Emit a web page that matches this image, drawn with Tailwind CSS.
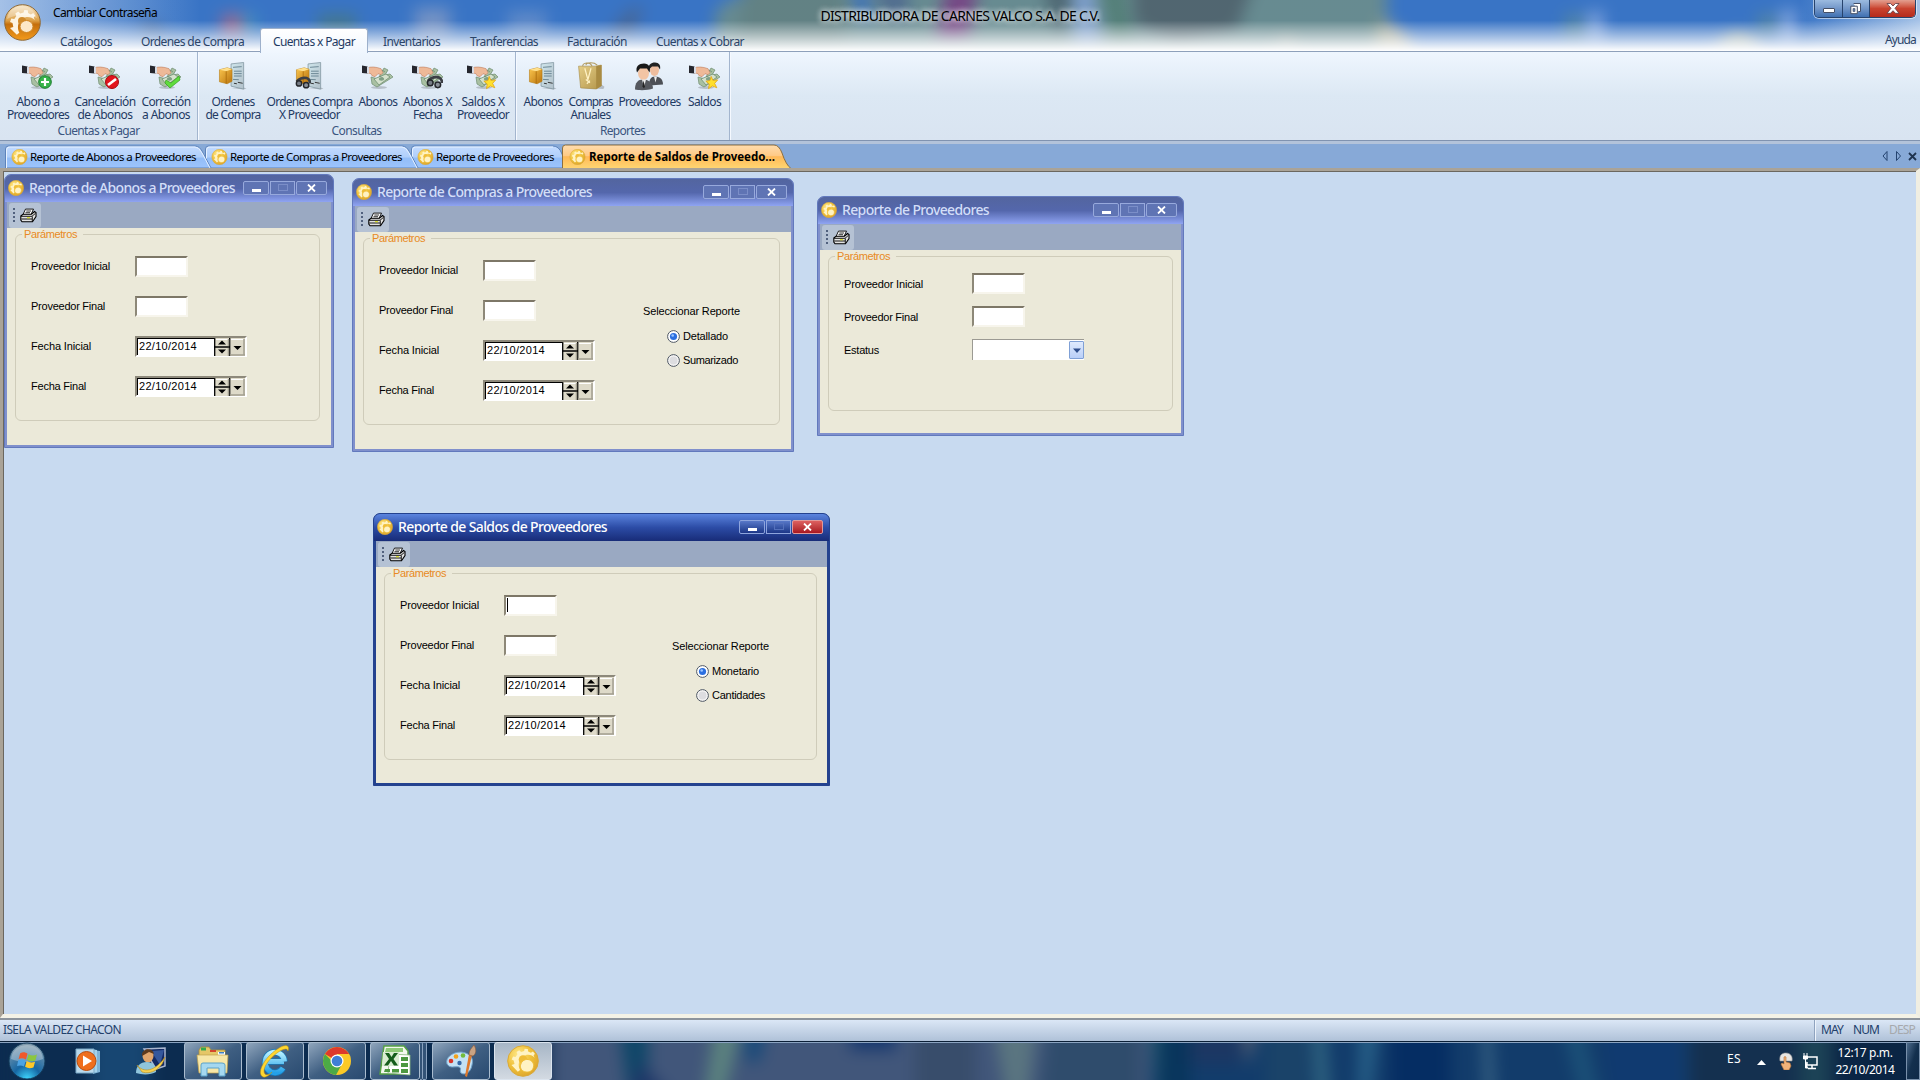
<!DOCTYPE html>
<html lang="es">
<head>
<meta charset="utf-8">
<title>DISTRIBUIDORA DE CARNES VALCO S.A. DE C.V.</title>
<script src="https://cdn.jsdelivr.net/npm/@tailwindcss/browser@4"></script>
</head>
<body class="w-[1920px] h-[1080px] overflow-hidden font-['Noto_Sans',sans-serif] text-[12px] leading-none text-[#1f3a63] whitespace-nowrap">

<!-- Shared icon definitions -->
<svg class="absolute w-0 h-0">
  <defs>
    <linearGradient id="orbG" x1="0" y1="0" x2="0" y2="1"><stop offset="0" stop-color="#f6e3c0"/><stop offset=".45" stop-color="#dc9f45"/><stop offset=".55" stop-color="#c56f0c"/><stop offset="1" stop-color="#f39a1c"/></linearGradient>
    <radialGradient id="gearG" cx=".35" cy=".3" r=".8"><stop offset="0" stop-color="#ffe98c"/><stop offset=".5" stop-color="#f0c23c"/><stop offset="1" stop-color="#dba22a"/></radialGradient>
    <linearGradient id="boxG" x1="0" y1="0" x2="1" y2="1"><stop offset="0" stop-color="#fbc64e"/><stop offset="1" stop-color="#b8720c"/></linearGradient>
    <linearGradient id="docG" x1="0" y1="0" x2="1" y2="1"><stop offset="0" stop-color="#cfe6ec"/><stop offset="1" stop-color="#b3c1ca"/></linearGradient>
    <linearGradient id="bagG" x1="0" y1="0" x2="1" y2="1"><stop offset="0" stop-color="#e6cf88"/><stop offset="1" stop-color="#b3954a"/></linearGradient>
    <radialGradient id="winG" cx=".5" cy="1" r=".95"><stop offset="0" stop-color="#3fd8ff"/><stop offset=".4" stop-color="#1667a4"/><stop offset="1" stop-color="#7d98ab"/></radialGradient>
    <linearGradient id="ieG" x1="0" y1="0" x2="0" y2="1"><stop offset="0" stop-color="#b7f0ff"/><stop offset="1" stop-color="#23a0e8"/></linearGradient>
  </defs>
  <symbol id="gear" viewBox="0 0 32 32">
    <circle cx="16" cy="16" r="15.300" fill="url(#gearG)" stroke="#d9a93a"/>
    <path d="M4.500 20l3-1-.8-3.500-2-1 1.300-3 2.500.5 2-2.700-1-2.300 2.700-1.800 1.900 1.700 3-.8.500-2.400 3.200.3.300 2.500 2.800 1.300 2-1.400 2 2.400-1.300 1.700 1 2.300c-2.500-3.500-8-4-11.500-1.500-4.500 3-5.500 9-3 13.700l-2.300 1.800-2.100-2.200z" fill="#fff3c4"/>
    <circle cx="16" cy="14.500" r="4.300" fill="#efbd38"/>
    <path d="M13.500 20.500c.5-4 4-6.500 7.500-6 4 .5 6.300 4 5.500 7.500-.8 3.700-4 5.500-7.500 5-3.700-.5-6-3.300-5.500-6.500z" fill="#fff3c4" stroke="#efbd38"/>
  </symbol>
  <symbol id="hand" viewBox="0 0 32 32">
    <ellipse cx="17" cy="25.500" rx="8" ry="1.500" fill="#000" opacity=".18"/>
    <path d="M9 15l7 2 6-11 4 2-3 5 5-1 3 3-16 10-5-3z" fill="#a9c0a2" stroke="#6f8c70" stroke-width=".7"/>
    <path d="M12 17l12-5 4 3-11 8zM20 8l3 2M17 14l4 2" fill="#d5e1cc" stroke="#66866a" stroke-width=".7"/>
    <ellipse cx="19.500" cy="17" rx="2.700" ry="1.800" fill="#7f9f85"/>
    <path d="M5 6c3-1.500 9-1.300 14 .7l2 4-2 2-3-1-3 3-3-1-1-2-4-1z" fill="#eeb998" stroke="#bd7e5e" stroke-width=".6"/>
    <path d="M0 3.500l5.500 1v7L0 11z" fill="#26272e"/><path d="M5 5l2 .3v6L5 11z" fill="#d7dce6"/>
  </symbol>
  <symbol id="star" viewBox="0 0 16 16"><path d="M7 1l2 4.500 5.500-.5-3.500 4 2.500 5L8.500 12 4 15l.8-5.300L1 6.500l4.700-.8z" fill="#ffe02c" stroke="#e0a314" stroke-width=".9"/></symbol>
  <symbol id="binoc" viewBox="0 0 18 14"><path d="M2 6C4 3 9 1 13 2c3 1 4 3 4 6" fill="none" stroke="#3c3f45" stroke-width="3"/><circle cx="4.500" cy="8" r="3" fill="#777d86" stroke="#25272b" stroke-width="1.600"/><circle cx="12.500" cy="10" r="3" fill="#8a9099" stroke="#25272b" stroke-width="1.600"/></symbol>
  <symbol id="order" viewBox="0 0 30 30">
    <path d="M13 27l13 1.500 3-1-3-1z" fill="#000" opacity=".2"/>
    <path d="M13 2l13-1.500v27.500L13 25z" fill="url(#docG)" stroke="#8195a0" stroke-width=".8"/>
    <path d="M15 5.500l9-.7M16 9.500h8M16 12h8M16 14.500h8M15 18l6 .3" stroke="#6b8794" stroke-width="1"/><path d="M20 21l5 1M16 22l3 .5" stroke="#333" stroke-width="1"/>
    <path d="M1 8l8-2 5 1.500V20l-5 2.500-8-2z" fill="url(#boxG)" stroke="#b5790f" stroke-width=".6"/>
    <path d="M1 8l7 1.500 6-2L9 6z" fill="#ffe08c"/><path d="M8 9.500v13" stroke="#a8690a" stroke-width=".8"/>
  </symbol>
  <symbol id="bag" viewBox="0 0 28 28">
    <path d="M4 25l22 1 1-2-4-3z" fill="#000" opacity=".2"/><path d="M2 4h16l6-1 0 20-5 3-15-1z" fill="url(#bagG)" stroke="#a48a48" stroke-width=".6"/><path d="M19 4l5-1v20l-5 3z" fill="#a98b42"/>
    <path d="M6 4c0-3 7-5 9 0M9 3c1-3 8-3 11 0" fill="none" stroke="#b29a5e"/><path d="M8 6l3 11 3-11M9 17l4 3M10 21l3-3" fill="none" stroke="#fff2c4" stroke-width="1.200"/>
  </symbol>
  <symbol id="people" viewBox="0 0 30 28">
    <path d="M14 23c0-6 2-9 6-9s8 2 8 8z" fill="#4c4f55"/><ellipse cx="19.500" cy="7.500" rx="4.500" ry="6" fill="#eebd9e"/><path d="M14 7c-1-5 2-7 6-7s6 3 5 7l-2-3-6 0z" fill="#222"/><path d="M19 14l1.500 6 1.500-6z" fill="#eee"/>
    <path d="M0 27c0-7 3-10 8-10s10 3 10 9c-5 2-14 2-18 1z" fill="#55585e"/><ellipse cx="8.500" cy="10.500" rx="5.500" ry="7" fill="#f2c4a4"/><path d="M2 10C0 4 4 1 9 1s7 4 5.500 9L12 6 5 6z" fill="#191919"/><path d="M7 17l2 8 2-8z" fill="#eee"/><path d="M8.500 18l-1 6 1.500 2 1-2z" fill="#222"/>
  </symbol>
  <symbol id="printer" viewBox="0 0 17 14">
    <path d="M5.500 .6h8L11 6H3z" fill="#fff" stroke="#000" stroke-width=".9"/><path d="M6.300 2.500h4.700M5.500 4.200h4.500" stroke="#000" stroke-width=".8"/>
    <path d="M.8 7.500L3 5.700h8.500l3-2.700 1.500 1v4l-3.500 5.300H2L.8 11.500z" fill="#e2e2e2" stroke="#000" stroke-width="1.100"/><path d="M1 7.800h11l3.500-3M1.300 10.500h10.700M12.300 13V8" fill="none" stroke="#000" stroke-width=".9"/><path d="M7 9.200h3" stroke="#d9dd00" stroke-width="1.100"/>
  </symbol>
  <symbol id="flag" viewBox="0 0 20 20">
    <path d="M3 3c3-1.500 5-1 7 .5L8.500 9C6 7.500 4 7.500 1.500 8.500z" fill="#f0592a"/><path d="M11 4c2.500 1.500 5 1.500 8 .3L17.500 10c-3 1-5 1-8-.7z" fill="#8cc63f"/>
    <path d="M1.200 9.700c2.500-1 4.500-1 7 .5L6.700 15.800C4.500 14.500 2.500 14.300 0 15.300z" fill="#4ba3e3"/><path d="M9.200 10.500c2.500 1.500 5 1.700 8 .6l-1.500 5.500c-3 1.200-5.500 1-8-.6z" fill="#ffc829"/>
  </symbol>
</svg>

<div class="w-full h-full flex flex-col">

<!-- Glass title area -->
<header class="relative h-[51px] shrink-0 overflow-hidden bg-[#3470c3]">
  <svg class="absolute left-0 -top-[20px] blur-[8px]" width="1920" height="91" viewBox="0 -20 1920 91">
    <rect x="-20" y="-30" width="1960" height="120" fill="#2f6dc2"/>
    <path d="M715 80V25q-5-20 30-30V-30H1387V80z" fill="#5f858b"/>
    <path d="M745-25h100v90h-110z" fill="#5a7b7e"/>
    <path d="M848-25h14l10 45h-12z" fill="#2d66bf"/><path d="M868-25h40v45h-20z" fill="#48668a"/>
    <path d="M948-25h32l-12 65h-32z" fill="#6f4080"/>
    <path d="M1040-25h35l-12 60h-6z" fill="#455f6b"/><path d="M1072-25h20l10 75h-28z" fill="#7699c8"/><path d="M1098-25h22l12 65h-20z" fill="#49786f"/>
    <path d="M1132-25h125l-20 55-60 15-42-20z" fill="#485e69"/>
    <path d="M1380 20q34 10 34 46h-40z" fill="#a1a48f"/><path d="M1275 55q10-38 25 0z" fill="#8b9a96"/>
    <rect x="222" y="14" width="22" height="24" fill="#94658c"/><rect x="242" y="14" width="14" height="20" fill="#3a8bbd"/>
    <rect x="318" y="14" width="38" height="20" fill="#3a7089"/><rect x="415" y="8" width="35" height="32" fill="#6d8dc2"/><path d="M135 22h20l12 14h-18z" fill="#31588f"/>
    <rect x="508" y="12" width="38" height="24" fill="#5885c6"/><path d="M608 34l22-26h14l-14 30z" fill="#3d5f92"/>
    <rect x="1565" y="14" width="18" height="28" fill="#4a7fa0"/><rect x="1587" y="12" width="16" height="32" fill="#7ba0dc"/>
    <rect x="1758" y="14" width="18" height="22" fill="#4a7fa0"/><rect x="1780" y="10" width="16" height="34" fill="#7ba0dc"/><path d="M1712 55q27-44 52 0z" fill="#9dab9c"/>
  </svg>
  <div class="absolute inset-y-0 left-0 w-[200px] bg-linear-to-r from-[#cfe0f5]/70 to-[#cfe0f5]/0"></div>
  <div class="absolute inset-y-0 right-0 w-[120px] bg-linear-to-r from-[#d3e4f6]/0 to-[#d3e4f6]/70"></div>
  <div class="absolute inset-0 bg-linear-to-b from-white/5 from-40% via-white/60 via-75% to-white"></div>
  <div class="absolute left-[53px] top-[7px] text-black"><span data-w="104">Cambiar Contraseña</span></div>
  <div class="absolute inset-x-0 top-[9px] text-center text-[14px] text-black [text-shadow:0_0_6px_#fff,0_0_6px_#fff]"><span data-w="279">DISTRIBUIDORA DE CARNES VALCO S.A. DE C.V.</span></div>
  <div class="absolute left-[1814px] top-0 w-[102px] h-[18px] flex rounded-b-[5px] border border-t-0 border-[#27436d] overflow-hidden shadow-[0_0_0_1px_#ffffff88]">
    <div class="w-[28px] bg-linear-to-b from-[#9cbbe0] via-[#7397c9] to-[#3f70b2] border-r border-[#27436d] flex items-end justify-center pb-[4px]"><i class="w-[12px] h-[5px] bg-white border border-[#444f66] rounded-[1px]"></i></div>
    <div class="w-[27px] bg-linear-to-b from-[#9cbbe0] via-[#7397c9] to-[#3f70b2] border-r border-[#27436d] flex items-center justify-center">
      <svg width="12" height="12" viewBox="0 0 12 12"><path d="M3.500.500h7v8h-2M.8 3.200h6.500v7.500H.8z" fill="#fff" stroke="#444f66"/><path d="M3 5.500h2v3H3z" fill="#5f7fae" stroke="#444f66" stroke-width=".6"/></svg></div>
    <div class="flex-1 bg-linear-to-b from-[#e39f90] via-[#c9432f] to-[#b52a1c] flex items-center justify-center"><svg width="14" height="11" viewBox="0 0 14 11"><path d="M1 .5h3.500L7 3 9.500.500H13L9 5.300l4 5H9.500L7 7.700l-2.500 2.600H1l4-5z" fill="#fff" stroke="#5a3a44" stroke-width=".8"/></svg></div>
  </div>
  <nav class="absolute left-0 bottom-0 w-full h-[23px] text-[#2b4468]">
    <div class="flex h-full items-center pt-[4px]">
      <span class="ml-[60px] w-[81px]"><span data-w="52">Catálogos</span></span>
      <span class="w-[132px]"><span data-w="103">Ordenes de Compra</span></span>
      <span class="w-[110px]"></span>
      <span class="w-[87px]"><span data-w="57">Inventarios</span></span>
      <span class="w-[97px]"><span data-w="68">Tranferencias</span></span>
      <span class="w-[89px]"><span data-w="60">Facturación</span></span>
      <span><span data-w="88">Cuentas x Cobrar</span></span>
      <span class="ml-auto mr-[4px] pb-[4px]"><span data-w="31">Ayuda</span></span>
    </div>
  </nav>
  <svg class="absolute left-[4px] top-[4px]" width="38" height="38" viewBox="0 0 38 38"><circle cx="18.500" cy="18.500" r="17.800" fill="url(#orbG)" stroke="#8e6a3a"/>
    <path d="M6 24l3.300-1-.8-4-2.500-1 1.300-3.500 3 .5 2-3-1-2.500 3-2 2 2 3.300-1 .7-2.500 3.500.3.300 2.700 2.800 1.400 2.300-1.400 2 2.500-1.400 2 1 2.600c-3-3.500-9-4-12.500-1.300-4.500 3-5.500 9-3 14l-2.500 2-2.300-2.400z" fill="#fdf3e0"/><circle cx="18" cy="17" r="4" fill="#d08a2a"/><ellipse cx="22.500" cy="22.500" rx="6.500" ry="6" fill="#fde8c8" stroke="#cf8523"/><path d="M3 15C5 4 13 2 18 2s13 3 15 12c-9-4-21-4-30 1z" fill="#fff" opacity=".3"/></svg>
</header>

<!-- Ribbon -->
<section class="relative h-[89px] shrink-0 border-t border-[#8ea0ba] bg-linear-to-b from-[#eff6fe] via-[#dce8f4] to-[#d9e4f1]">
  <div class="absolute left-[260px] -top-[24px] w-[108px] h-[25px] rounded-t-[3px] border border-b-0 border-[#9db0cb] bg-linear-to-b from-white to-[#eff6fe] flex items-center justify-center text-[#1f3a63] pt-[1px]"><span data-w="82">Cuentas x Pagar</span></div>
  <div id="ribbon" class="flex h-full"></div>
</section>
<div class="h-[4px] shrink-0 border-t border-[#8093b0] bg-[#b3c3da]"></div>

<!-- Document tabs -->
<div class="h-[24px] shrink-0 bg-[#87a9d7] relative font-['Noto_Sans',sans-serif] text-black">
  <svg class="absolute left-0 top-0" width="800" height="24" viewBox="0 0 800 24">
    <defs><linearGradient id="tb" x1="0" y1="0" x2="0" y2="1"><stop offset="0" stop-color="#c3dbff"/><stop offset=".5" stop-color="#b0cffb"/><stop offset=".55" stop-color="#93bdf7"/><stop offset="1" stop-color="#9cc4fc"/></linearGradient>
    <linearGradient id="to" x1="0" y1="0" x2="0" y2="1"><stop offset="0" stop-color="#ffdcae"/><stop offset=".45" stop-color="#ffca86"/><stop offset=".5" stop-color="#ffb958"/><stop offset="1" stop-color="#ffd672"/></linearGradient></defs>
    <path d="M411.500 24V5q0-3 3-3H553q6 0 9 8l6 14z" fill="url(#tb)" stroke="#5d83bb"/><path d="M412.500 24V6q0-3 3-3H553" fill="none" stroke="#e6f1ff"/>
    <path d="M205.500 24V5q0-3 3-3H402q5 0 8 7l8 15z" fill="url(#tb)" stroke="#5d83bb"/><path d="M206.500 24V6q0-3 3-3H402q4 0 7 6l8 15" fill="none" stroke="#e6f1ff"/>
    <path d="M5.500 24V5q0-3 3-3H195q5 0 8 7l8 15z" fill="url(#tb)" stroke="#5d83bb"/><path d="M6.500 24V6q0-3 3-3H195q4 0 7 6l8 15" fill="none" stroke="#e6f1ff"/>
    <path d="M562.500 24.500V4q0-3 3-3H774q5 0 8 8 4 12 9 15.500z" fill="url(#to)" stroke="#8d6f3e"/>
  </svg>
  <div class="absolute inset-0 flex items-center text-[11.5px] pt-[2px]">
    <div class="ml-[11px] w-[200px] flex items-center gap-[2px]"><svg width="17" height="16"><use href="#gear"/></svg><span data-w="166">Reporte de Abonos a Proveedores</span></div>
    <div class="w-[206px] flex items-center gap-[2px]"><svg width="17" height="16"><use href="#gear"/></svg><span data-w="172">Reporte de Compras a Proveedores</span></div>
    <div class="w-[152px] flex items-center gap-[2px]"><svg width="17" height="16"><use href="#gear"/></svg><span data-w="118">Reporte de Proveedores</span></div>
    <div class="flex items-center gap-[3px] font-bold"><svg width="17" height="16"><use href="#gear"/></svg><span data-w="186">Reporte de Saldos de Proveedo...</span></div>
    <svg class="ml-auto mr-[3px] mb-[3px]" width="36" height="12" viewBox="0 0 36 12"><path d="M6 1.500v9L2 6zM15.500 1.500v9l4-4.500z" fill="none" stroke="#24436f"/><path d="M28 3l7 7m0-7l-7 7" stroke="#1e3350" stroke-width="1.800"/></svg>
  </div>
</div>

<!-- MDI workspace -->
<main id="mdi" class="relative h-[850px] shrink-0 bg-[#c8daf0] border-l-[3px] border-r-[4px] border-t-[3px] border-b-[4px] border-t-[#aaa397] border-l-[#aaa397] border-r-[#f0eee2] border-b-[#f4f2e6] shadow-[inset_1px_1px_0_#6b675f]"></main>

<!-- Status bar -->
<footer class="h-[23px] shrink-0 border-t-2 border-[#8d949c] bg-linear-to-b from-[#dbe7f6] to-[#afc1d8] flex items-center text-[#22406b] relative">
  <span class="ml-[3px] mb-[1px]"><span data-w="118">ISELA VALDEZ CHACON</span></span>
  <div class="ml-auto h-full border-l border-[#8fa3bf] shadow-[inset_1px_0_0_#eef4fc] flex items-center w-[106px] pl-[6px] pb-[1px]">
    <span class="w-[32px]"><span data-w="22">MAY</span></span><span class="w-[36px]"><span data-w="26">NUM</span></span><span class="text-[#a6a9ad]"><span data-w="26">DESP</span></span>
  </div>
</footer>

<!-- Taskbar -->
<div class="relative h-[39px] shrink-0 bg-[#0c2c50] border-t border-[#0b1f36] overflow-hidden text-white">
  <svg class="absolute left-0 -top-[20px] blur-[8px]" width="1940" height="79" viewBox="0 -20 1940 79">
    <rect x="-20" y="-20" width="1960" height="80" fill="#123c6b"/><rect x="-20" y="-20" width="570" height="80" fill="#0c2c50"/>
    <rect x="90" y="-25" width="60" height="90" fill="#174672"/><path d="M550-25H1150V65H550z" fill="#41567a"/>
    <path d="M618-28h30v94h-18z" fill="#0e4668"/><path d="M640 20l36 40h-50z" fill="#1e3768"/><path d="M716-25h28l-20 80h-20z" fill="#5b827f"/><path d="M744-25h24l-8 45h-14z" fill="#184a7a"/><path d="M850-26h46v34h-46z" fill="#17386f"/>
    <path d="M915-20h60v80h-60z" fill="#384d6b"/><path d="M992-25h46l-10 80h-22z" fill="#5a7580"/><path d="M1050-25h90v80h-100z" fill="#2f4c6c"/>
    <path d="M1148-28h14l10 84h-14z" fill="#20566e"/><path d="M1160-28h30v84h-30z" fill="#08355c"/><path d="M1190-28h50v50h-50z" fill="#1c3763"/>
    <path d="M1240-25h20l-12 50z" fill="#5c6374"/><path d="M1265-25h45v80h-45z" fill="#1a4369"/><path d="M1312-25h12l6 80h-14z" fill="#316682"/><path d="M1360-25h20l-10 80h-12z" fill="#276088"/>
    <path d="M1390-25h60v80h-60z" fill="#052d63"/><path d="M1482-25h8l5 80h-10z" fill="#3c6686"/><path d="M1560-25h20l20 80h-20z" fill="#1b5078"/><path d="M1600-25h80v80h-70z" fill="#103a70"/>
    <path d="M1690-28h250v90H1690z" fill="#14304f"/><path d="M1800-28h30v90h-30z" fill="#1c4356"/><path d="M1835-28h100v90h-100z" fill="#0a2544"/>
  </svg>
  <div class="absolute inset-x-0 top-0 h-px bg-[#8ba3c0]"></div>
  <div class="relative h-full flex items-center">
    <svg class="ml-[8px] shrink-0" width="38" height="38" viewBox="0 0 38 38"><circle cx="19" cy="19" r="18" fill="url(#winG)" stroke="#123a5a"/><path d="M3 17C4 7 12 3 19 3s15 4 16 14c-9 4-23 4-32 0z" fill="#fff" opacity=".3"/><use href="#flag" x="9" y="8" width="21" height="21"/></svg>
    <svg class="ml-[29px] shrink-0" width="27" height="26" viewBox="0 0 27 26"><path d="M18 2l7 1v21l-7 2z" fill="#7fb4d8"/><path d="M15 1l7 1v22l-7 1z" fill="#a5d2ea"/><path d="M1 1h18v24H1z" fill="#b9d9ec" stroke="#7aa9c8"/><circle cx="11.500" cy="13" r="9.500" fill="#ef6f1d" stroke="#b94e10"/><path d="M8 7.500l9 5.500-9 5.500z" fill="#fff"/></svg>
    <svg class="ml-[33px] shrink-0" width="32" height="28" viewBox="0 0 32 28"><path d="M9 2l21-1v18l-9 3z" fill="#132a63" stroke="#aab7cf" stroke-width="1.500"/><path d="M16 4l13-1-4 15z" fill="#34579c"/><ellipse cx="13" cy="9" rx="5.500" ry="6.500" fill="#e0a56c"/><path d="M7 9c-1-8 11-9 12-2l-5-2z" fill="#5d3a1d"/><path d="M1 26c0-7 4-11 11-11 6 0 9 4 9 10-5 3-14 3-20 1z" fill="#8fc5dc"/><path d="M2 18c6 8 18 7 28-8-3 12-14 18-23 15z" fill="#f6d253" stroke="#b98b1b" stroke-width=".6"/></svg>
    <div class="ml-[17px] w-[58px] h-[38px] shrink-0 rounded-[3px] border border-[#a9bccf] bg-linear-to-br from-[#8fa5bc] via-[#3f5f82] to-[#294a70] flex items-center justify-center">
      <svg width="34" height="32" viewBox="0 0 34 32"><path d="M3 5l2-3h8l2 3h14v21H3z" fill="#e5c768" stroke="#a98d3c" stroke-width=".8"/><path d="M5 2.500h5v3H5z" fill="#35a84c"/><path d="M14 5h6v2h-6z" fill="#d4452d"/><path d="M22 7h7v3h-7z" fill="#fff"/><path d="M23 7h5v1.500h-5z" fill="#3a80c9"/><path d="M1 10h31l-1 18H3z" fill="#f7e7a8" stroke="#bfa04e" stroke-width=".7"/><path d="M5 31V20q0-2 2-2h19q3 0 3 2v11h-6v-8H11v8z" fill="#a5d8f0" stroke="#5aa2ca"/></svg></div>
    <div class="ml-[4px] w-[58px] h-[38px] shrink-0 rounded-[3px] border border-[#a9bccf] bg-linear-to-br from-[#8fa5bc] via-[#3f5f82] to-[#294a70] flex items-center justify-center">
      <svg width="32" height="34" viewBox="0 0 32 34"><path d="M6 17.500h19M25.500 17.500A9.700 10.200 0 1 0 24 24" fill="none" stroke="#1878b8" stroke-width="6.500"/><path d="M7 17.500h18M25.500 17.500A9.700 10.200 0 1 0 24 24" fill="none" stroke="url(#ieG)" stroke-width="5"/><path d="M2 31C-1 25 8 11 20 4c7-4 11-3 9 3-1-3-4-2-8 0C11 13 2 25 6 30c2 2 5 0 7-2-4 5-9 7-11 3z" fill="#ffd630" stroke="#b98c10" stroke-width=".5"/></svg></div>
    <div class="ml-[4px] w-[58px] h-[38px] shrink-0 rounded-[3px] border border-[#a9bccf] bg-linear-to-br from-[#8fa5bc] via-[#3f5f82] to-[#294a70] flex items-center justify-center">
      <svg width="30" height="30" viewBox="0 0 30 30"><circle cx="15" cy="15" r="14" fill="#fbc926"/><path d="M15 15L2.900 8A14 14 0 0 1 27.100 8H15z" fill="#dd3a2c"/><path d="M2.900 8A14 14 0 0 0 14 29l6-11-5 2z" fill="#4caa46"/><circle cx="15" cy="15" r="6.500" fill="#fff"/><circle cx="15" cy="15" r="5.300" fill="#3f7fd6"/></svg></div>
    <div class="ml-[4px] w-[50px] h-[38px] shrink-0 rounded-[3px] border border-[#a9bccf] bg-linear-to-br from-[#8fa5bc] via-[#3f5f82] to-[#294a70] flex items-center justify-center">
      <svg width="32" height="32" viewBox="0 0 32 32"><path d="M5 1h20l4 5v23H1z" fill="#f3f8ef" stroke="#55a044" stroke-width="1.500"/><path d="M7 3h17v4H6z" fill="#8ec977"/><path d="M11 9l20 1v20l-22-2z" fill="#fff" stroke="#89b67e" stroke-width=".8"/><path d="M22 12h7v4h-7zM22 18h7v4h-7zM22 24h7v4h-7zM13 24h7v3.500h-7zM6 24h5v3H5z" fill="#4c9840"/><path d="M4 7h16v14H3z" fill="#d9ecd1"/><path d="M6 8h4l2.500 4L15 8h4l-4.500 6 4.500 6.500h-4L12 16l-3 4.500H5L10 14z" fill="#155d1b"/></svg></div>
    <div class="w-[3px] h-[38px] shrink-0 border-r border-y border-[#8ba3c0] bg-[#335377] rounded-r-[2px]"></div>
    <div class="w-[4px] h-[38px] shrink-0 border-r border-y border-[#8ba3c0] bg-[#335377] rounded-r-[2px]"></div>
    <div class="ml-[5px] w-[58px] h-[38px] shrink-0 rounded-[3px] border border-[#a9bccf] bg-linear-to-br from-[#8fa5bc] via-[#3f5f82] to-[#294a70] flex items-center justify-center">
      <svg width="32" height="34" viewBox="0 0 32 34"><path d="M2 20c-2-6 5-12 14-12 9 1 13 6 11 13-1 7-7 11-11 8-2-2 1-5-2-6-4-1-9 2-12-3z" fill="#c4e2f5" stroke="#6ea0c8"/><circle cx="6" cy="17" r="2.300" fill="#d9362a"/><circle cx="11" cy="12.500" r="2.300" fill="#f2a21c"/><circle cx="18" cy="11.500" r="2.300" fill="#72bb3b"/><circle cx="14.500" cy="19" r="2.200" fill="#3569a9"/><path d="M27 11l-5 22-2-1 4-22z" fill="#de7a2d"/><path d="M24 11c0-5 2-6 5-10 3 5 2 9-1 11z" fill="#c9a383" stroke="#86593a" stroke-width=".6"/></svg></div>
    <div class="ml-[4px] w-[58px] h-[38px] shrink-0 rounded-[3px] border border-[#dbe4ee] bg-linear-to-b from-[#a7b6c6] to-[#d3dae2] flex items-center justify-center">
      <svg width="32" height="32"><use href="#gear"/></svg></div>
    <div class="ml-auto flex items-center">
      <span class="w-[30px] text-[12px] mb-[4px]"><span data-w="14">ES</span></span>
      <svg class="w-[9px] h-[5px] mr-[13px] mt-[3px]" viewBox="0 0 9 5"><path d="M0 5l4.500-5L9 5z" fill="#fff"/></svg>
      <svg class="mr-[10px]" width="14" height="18" viewBox="0 0 14 18"><path d="M1 9C0 3 3 1 7 1s7 3 6 8z" fill="#e8e6e2" stroke="#9a9a9a" stroke-width=".6"/><path d="M5 5q1-1 2 0v5l4 1 1 3-2 4H5L2 12l1-1 2 1z" fill="#f0b27a" stroke="#b8733b" stroke-width=".6"/></svg>
      <svg class="mr-[17px]" width="15" height="17" viewBox="0 0 15 17"><path d="M5 4h9v8H4V9M9 12v3M5 15.500h8" fill="none" stroke="#fff" stroke-width="1.500"/><path d="M1 0v3m3-3v3M.5 3h4v3h-4zM2.500 6v9H5" fill="#fff" stroke="#fff"/></svg>
      <div class="w-[60px] flex flex-col items-center gap-[5px] text-[12px]"><span data-w="55">12:17 p.m.</span><span data-w="59">22/10/2014</span></div>
      <div class="ml-[11px] w-[14px] h-[38px] border border-[#7890ab] bg-linear-to-br from-[#4e6c8c] via-[#13304e] to-[#0f2a48]"></div>
    </div>
  </div>
</div>
</div>

<script>
// ---- Ribbon -------------------------------------------------------------
const badges = {
  plus: '<circle cx="23" cy="20" r="6.300" fill="#37b34a" stroke="#1c7d2e"/><path d="M19 20h8M23 16v8" stroke="#fff" stroke-width="2.200"/>',
  no: '<circle cx="23" cy="20" r="6.500" fill="#e3141c" stroke="#a80b12"/><path d="M19 23l8-6" stroke="#fff" stroke-width="2.800"/>',
  check: '<path d="M16 18l5 3 8-7 1 4-10 8-5-5z" fill="#5fdc3c" stroke="#38a020" stroke-width=".7"/>',
  star: '<use href="#star" x="16" y="13" width="14" height="15"/>',
  binoc: '<use href="#binoc" x="14" y="13" width="17" height="14"/>',
  none: ''
};
const hand = b => `<svg width="32" height="30" viewBox="0 0 32 30"><use href="#hand" width="32" height="32"/>${badges[b]}</svg>`;
const use = (id, extra = '') => `<svg width="30" height="30" viewBox="0 0 30 30"><use href="#${id}" width="30" height="29"/>${extra}</svg>`;
// [left, width, icon, [text, width]...]
const groups = [
  { w: 198, name: ['Cuentas x Pagar', 82], items: [
    [7, 62, hand('plus'), ['Abono a', 43], ['Proveedores', 62]],
    [74, 62, hand('no'), ['Cancelación', 61], ['de Abonos', 55]],
    [141, 50, hand('check'), ['Correción', 49], ['a Abonos', 48]]] },
  { w: 318, name: ['Consultas', 50], items: [
    [7, 56, use('order'), ['Ordenes', 43], ['de Compra', 55]],
    [68, 87, use('order', '<use href="#binoc" x="0" y="14" width="16" height="13"/>'), ['Ordenes Compra', 86], ['X Proveedor', 61]],
    [160, 40, hand('none'), ['Abonos', 39]],
    [205, 49, hand('binoc'), ['Abonos X', 49], ['Fecha', 29]],
    [259, 52, hand('star'), ['Saldos X', 43], ['Proveedor', 52]]] },
  { w: 214, name: ['Reportes', 45], items: [
    [7, 40, use('order'), ['Abonos', 39]],
    [52, 45, use('bag'), ['Compras', 44], ['Anuales', 40]],
    [102, 63, use('people'), ['Proveedores', 62]],
    [171, 35, hand('star'), ['Saldos', 33]]] }
];
document.getElementById('ribbon').innerHTML = groups.map(g => {
  let x = 0;
  const items = g.items.map(([l, w, icon, ...lines]) => {
    const m = l - x; x = l + w;
    return `<div class="flex flex-col items-center shrink-0" style="width:${w}px;margin-left:${m}px">${icon}
      <div class="flex flex-col items-center gap-[1px] mt-[4px]">${lines.map(([t, tw]) => `<span data-w="${tw}">${t}</span>`).join('')}</div></div>`;
  }).join('');
  return `<div class="h-full flex flex-col border-r border-[#a3b5ce] shadow-[1px_0_0_#f5f9ff] pt-[10px]" style="width:${g.w}px">
    <div class="flex h-[63px]">${items}</div>
    <div class="text-center text-[#3b5580]"><span data-w="${g.name[1]}">${g.name[0]}</span></div></div>`;
}).join('');

// ---- Report windows -----------------------------------------------------
const txt = ([t, w]) => `<span data-w="${w}">${t}</span>`;
const box = caret => `<div class="w-[53px] h-[21px] bg-white border-2 border-t-[#7d7767] border-l-[#8d8878] border-r-[#f7f5ec] border-b-[#f7f5ec] p-[1px]">${caret ? '<div class="w-px h-[14px] bg-black"></div>' : ''}</div>`;
const date = () => `<div class="w-[112px] h-[21px] bg-[#e6e2d2] border-2 border-t-[#8d897b] border-l-[#8d897b] border-r-white border-b-white shadow-[inset_1px_1px_0_#000] flex text-black">
  <div class="w-[76px] shrink-0 ml-px mt-px bg-white pl-[1px] pt-[2px]">${txt(['22/10/2014', 58])}</div>
  <svg class="shrink-0" width="31" height="18" viewBox="0 0 31 18"><path d="M0 0h31v18H0z" fill="#dedac9"/><path d="M.7 0v18M15.700 0v18M0 9h15" stroke="#000" stroke-width="1.300"/><path d="M2 1.500h12M17 1.500h13" stroke="#fff"/><path d="M14.500 1v7M30 1v16M14.500 10v8M16 17h15" stroke="#a39f90" stroke-width="1.500"/><path d="M4 6.500h8L8 2.500zM4 11.500h8l-4 4zM19.500 8h8l-4 4z"/></svg></div>`;
const combo = () => `<div class="w-[112px] h-[21px] bg-white border-t border-l border-[#9b9a93] flex justify-end p-[1px] pr-0"><div class="w-[15px] h-full rounded-[1px] border border-[#7fa0d6] bg-linear-to-b from-[#dfeafd] to-[#b9cff8] flex items-center justify-center"><svg width="8" height="5" viewBox="0 0 8 5"><path d="M0 .5h8L4 5z" fill="#2d4d8c"/></svg></div></div>`;
const radio = (on, l) => `<div class="flex items-center gap-[3px] h-[24px]"><svg width="13" height="13" viewBox="0 0 13 13"><circle cx="6.500" cy="6.500" r="5.900" fill="${on ? '#fff' : '#f6f5f4'}" stroke="#4f5864"/>${on ? '<circle cx="6.500" cy="6.500" r="3.600" fill="#2b6fe0"/><circle cx="5.700" cy="5.500" r="1.300" fill="#9cc6ff"/>' : '<circle cx="6.500" cy="6.500" r="4" fill="#dddde0"/>'}</svg><div class="pt-[1px]">${txt(l)}</div></div>`;
const PI = ['Proveedor Inicial', 79], PF = ['Proveedor Final', 74], FI = ['Fecha Inicial', 60], FF = ['Fecha Final', 55];
const four = c => [[PI, box(c)], [PF, box()], [FI, date()], [FF, date()]];
const wins = [
  { x: 4, y: 174, w: 330, h: 274, gh: 187, mr: 11, t: ['Reporte de Abonos a Proveedores', 206], step: 40, pad: 11, col: 104, rows: four() },
  { x: 352, y: 178, w: 442, h: 274, gh: 187, mr: 11, t: ['Reporte de Compras a Proveedores', 215], step: 40, pad: 11, col: 104, rows: four(),
    side: { x: 291, opts: [['Detallado', 45], ['Sumarizado', 55]] } },
  { x: 817, y: 196, w: 367, h: 240, gh: 155, mr: 8, t: ['Reporte de Proveedores', 147], step: 33, pad: 10, col: 128, rows: [[PI, box()], [PF, box()], [['Estatus', 35], combo()]] },
  { x: 373, y: 513, w: 457, h: 273, gh: 187, mr: 10, t: ['Reporte de Saldos de Proveedores', 209], step: 40, pad: 11, col: 104, rows: four(true), active: true,
    side: { x: 299, opts: [['Monetario', 47], ['Cantidades', 53]] } }
];
const skin = {
  on: { f: 'border-[#24428f] bg-[#24428f]', b: 'from-[#5c84de] via-[#2c4ca6] to-[#182c78]', t: 'text-white', k: 'border-[#8ea5dd] bg-linear-to-b from-[#5878c8] to-[#1d3788]', c: 'border-[#e09a9a] bg-linear-to-b from-[#dd6060] to-[#a81420]', box: '#5470bb' },
  off: { f: 'border-[#6279bd] bg-[#8090cc]', b: 'from-[#53659f] via-[#5467ac] to-[#8fa4f2]', t: 'text-[#d3def8]', k: 'border-[#97a9dc] bg-[#5f74b4]', c: 'border-[#97a9dc] bg-[#5f74b4]', box: '#7b8ec8' }
};
document.getElementById('mdi').innerHTML = wins.map(v => {
  const s = v.active ? skin.on : skin.off;
  return `<section class="absolute flex flex-col rounded-t-[7px] border overflow-hidden ${s.f}" style="left:${v.x - 3}px;top:${v.y - 171}px;width:${v.w}px;height:${v.h}px">
    <div class="h-[27px] shrink-0 bg-linear-to-b ${s.b} flex items-center pl-[3px] pr-[6px] pb-[1px]">
      <svg class="mr-[5px] shrink-0" width="16" height="16"><use href="#gear"/></svg>
      <span class="text-[14px] font-medium ${s.t}"><span data-w="${v.t[1]}">${v.t[0]}</span></span>
      <div class="ml-auto shrink-0 flex gap-[1px] mb-[1px]">
        <div class="w-[26px] h-[14px] rounded-[2px] border flex items-end justify-center pb-[2px] ${s.k}"><i class="w-[9px] h-[3px] bg-white"></i></div>
        <div class="w-[25px] h-[14px] border flex items-center justify-center ${s.k}"><svg width="10" height="7"><rect x=".5" y=".5" width="9" height="6" fill="none" stroke="${s.box}"/></svg></div>
        <div class="w-[31px] h-[14px] rounded-[2px] border flex items-center justify-center ${s.c}"><svg width="9" height="8" viewBox="0 0 9 8"><path d="M1 .5l7 7M8 .5l-7 7" stroke="#fff" stroke-width="1.800"/></svg></div>
      </div>
    </div>
    <div class="mx-[2px] mb-[2px] flex-1 flex flex-col bg-[#ebe9d9]">
      <div class="h-[26px] shrink-0 bg-[#9aa9c2] pl-[2px] pt-[1px]">
        <div class="w-[32px] h-[25px] rounded-[3px] bg-[#b5c2d4] flex items-center pl-[4px] pb-[1px] gap-[5px]"><svg class="shrink-0" width="2" height="15"><path d="M1 0v15" stroke="#51617e" stroke-width="2" stroke-dasharray="2 2"/></svg><svg class="shrink-0" width="17" height="15"><use href="#printer"/></svg></div>
      </div>
      <div class="relative ml-[8px] mt-[6px] rounded-[6px] border border-[#cfccba] font-['Liberation_Sans',sans-serif] text-[11px] text-black" style="height:${v.gh}px;padding-top:${v.pad}px;margin-right:${v.mr}px">
        <div class="absolute left-[6px] -top-[6px] bg-[#ebe9d9] pl-[2px] pr-[6px] text-[#e88a24]">${txt(['Parámetros', 53])}</div>
        ${v.rows.map(([l, c]) => `<div class="flex items-center pl-[15px]" style="height:${v.step}px"><div class="pt-[1px]" style="width:${v.col}px">${txt(l)}</div>${c}</div>`).join('')}
        ${v.side ? `<div class="absolute top-[60px]" style="left:${v.side.x - 12}px"><div class="h-[26px] flex items-center mt-[-1px]">${txt(['Seleccionar Reporte', 97])}</div><div class="pl-[24px]">${radio(true, v.side.opts[0])}${radio(false, v.side.opts[1])}</div></div>` : ''}
      </div>
    </div>
  </section>`;
}).join('');

// ---- Track each label to its nominal width ------------------------------
const labels = [...document.querySelectorAll('[data-w]')];
function track() {
  for (const el of labels) {
    el.style.display = 'inline-block';
    el.style.flexShrink = '0';
    el.style.letterSpacing = '0px';
  }
  const range = document.createRange();
  const widths = labels.map(el => { range.selectNodeContents(el); return range.getBoundingClientRect().width; });
  labels.forEach((el, i) => {
    el.style.letterSpacing = ((+el.dataset.w - widths[i]) / el.textContent.length).toFixed(3) + 'px';
  });
}
track();
addEventListener('load', track);
document.fonts.ready.then(track);
</script>
</body>
</html>
